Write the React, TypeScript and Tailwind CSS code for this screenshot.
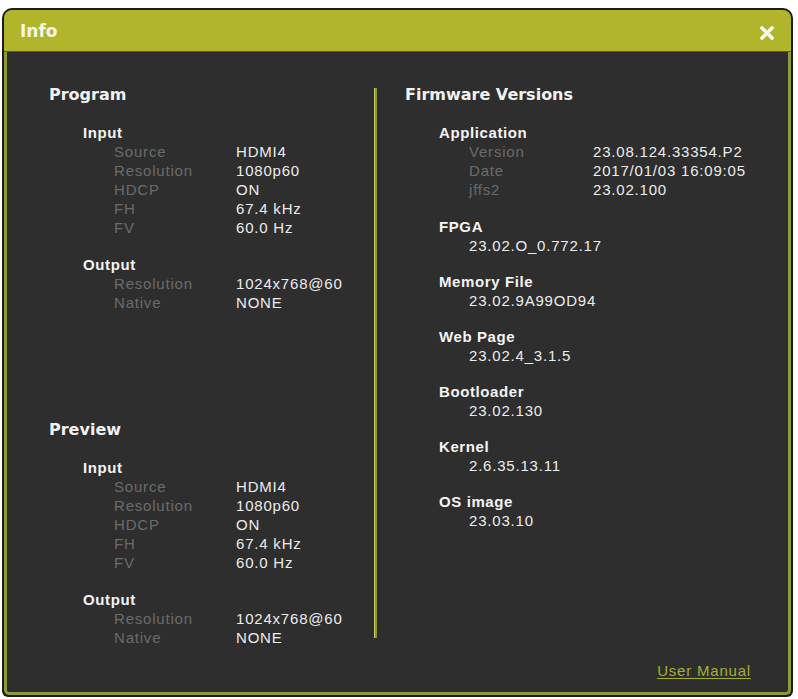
import React from "react";

type Row = { label: string; value: string };

const heading = "font-['DejaVu_Sans',sans-serif] font-bold text-[16px] leading-[20px] text-[#f2f2f2]";
const sub = "font-['Liberation_Sans',Arial,sans-serif] font-bold text-[15px] leading-[19px] tracking-[0.6px] text-[#f4f4f4]";
const body = "font-['Liberation_Sans',Arial,sans-serif] text-[15px] leading-[19px] tracking-[0.8px]";

const inputRows: Row[] = [
  { label: "Source", value: "HDMI4" },
  { label: "Resolution", value: "1080p60" },
  { label: "HDCP", value: "ON" },
  { label: "FH", value: "67.4 kHz" },
  { label: "FV", value: "60.0 Hz" },
];

const outputRows: Row[] = [
  { label: "Resolution", value: "1024x768@60" },
  { label: "Native", value: "NONE" },
];

const firmware = [
  { name: "FPGA", value: "23.02.O_0.772.17" },
  { name: "Memory File", value: "23.02.9A99OD94" },
  { name: "Web Page", value: "23.02.4_3.1.5" },
  { name: "Bootloader", value: "23.02.130" },
  { name: "Kernel", value: "2.6.35.13.11" },
  { name: "OS image", value: "23.03.10" },
];

function Rows({ rows }: { rows: Row[] }) {
  return (
    <div className={`pl-[31px] ${body}`}>
      {rows.map((row) => (
        <div key={row.label} className="flex">
          <span className="w-[122px] shrink-0 text-[#6b6b6b]">{row.label}</span>
          <span className="text-[#ececec]">{row.value}</span>
        </div>
      ))}
    </div>
  );
}

function SignalSection({ title, className }: { title: string; className?: string }) {
  return (
    <div className={className}>
      <h2 className={heading}>{title}</h2>
      <div className="mt-[18px] pl-[34px]">
        <h3 className={sub}>Input</h3>
        <Rows rows={inputRows} />
        <h3 className={`mt-[18px] ${sub}`}>Output</h3>
        <Rows rows={outputRows} />
      </div>
    </div>
  );
}

export default function App() {
  return (
    <div className="h-[699px] w-[798px] bg-white pb-[2px] pl-[2px] pr-[5px] pt-[8px]">
      <div className="flex h-full flex-col rounded-b-[6px] rounded-t-[10px] bg-[#1c1c1c] p-[2px]">
        <div className="flex h-[42px] shrink-0 items-center justify-between rounded-t-[8px] border-b border-[#5b5f1c] bg-[#b1b52c] pl-[16px] pr-[17px]">
          <span className="pt-[3px] font-['DejaVu_Sans',sans-serif] text-[17px] font-bold text-[#f6f6e6]">Info</span>
          <svg width="14" height="14" viewBox="0 0 14 14" className="mt-[5px]">
            <path d="M2 2L12 12M12 2L2 12" stroke="#f8f8ee" strokeWidth="3.6" strokeLinecap="square" />
          </svg>
        </div>

        <div className="flex min-h-0 flex-1 rounded-b-[5px] border-[3px] border-t-0 border-[#8e9a3a] bg-[#2e2e2e]">
          <div className="w-[367px] shrink-0 pl-[42px] pt-[33px]">
            <SignalSection title="Program" />
            <SignalSection title="Preview" className="mt-[108px]" />
          </div>

          <div className="mt-[36px] h-[550px] w-[3px] shrink-0 bg-[#8b9630] shadow-[inset_1px_0_0_#c8d060]" />

          <div className="flex flex-1 flex-col pb-[12px] pl-[28px] pr-[37px] pt-[33px]">
            <h2 className={heading}>Firmware Versions</h2>
            <div className="mt-[18px] pl-[34px]">
              <h3 className={sub}>Application</h3>
              <div className={body}>
                {[
                  { label: "Version", value: "23.08.124.33354.P2" },
                  { label: "Date", value: "2017/01/03 16:09:05" },
                  { label: "jffs2", value: "23.02.100" },
                ].map((row) => (
                  <div key={row.label} className="flex pl-[30px]">
                    <span className="w-[124px] shrink-0 text-[#6b6b6b]">{row.label}</span>
                    <span className="text-[#ececec]">{row.value}</span>
                  </div>
                ))}
              </div>
              {firmware.map((item, i) => (
                <div key={item.name} className={i === 0 ? "mt-[18px]" : "mt-[17px]"}>
                  <h3 className={sub}>{item.name}</h3>
                  <div className={`pl-[30px] text-[#ececec] ${body}`}>{item.value}</div>
                </div>
              ))}
            </div>
            <a
              href="#"
              className={`mt-auto self-end text-[#a5b02e] underline underline-offset-2 ${body}`}
            >
              User Manual
            </a>
          </div>
        </div>
      </div>
    </div>
  );
}
